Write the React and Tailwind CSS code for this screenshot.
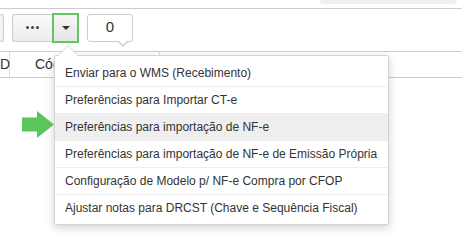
import { useState } from 'react';

const items = [
  'Enviar para o WMS (Recebimento)',
  'Preferências para Importar CT-e',
  'Preferências para importação de NF-e',
  'Preferências para importação de NF-e de Emissão Própria',
  'Configuração de Modelo p/ NF-e Compra por CFOP',
  'Ajustar notas para DRCST (Chave e Sequência Fiscal)',
];

function DropdownMenu({ active }) {
  return (
    <div className="absolute left-[54px] top-[55px] w-[335px] bg-white border border-[#d4d4d4] rounded-[2px] shadow-[0_3px_10px_rgba(0,0,0,0.18)] py-[3px]">
      {/* caret on top */}
      <div className="absolute left-[2px] top-[-11px] w-0 h-0 border-l-[11px] border-r-[11px] border-b-[11px] border-l-transparent border-r-transparent border-b-[#d4d4d4]" />
      <div className="absolute left-[3px] top-[-10px] w-0 h-0 border-l-[10px] border-r-[10px] border-b-[10px] border-l-transparent border-r-transparent border-b-white" />
      {items.map((label, i) => (
        <div
          key={label}
          className={`h-[27px] flex items-center px-[10px] text-[12px] text-[#333] ${
            i > 0 ? 'border-t border-[#eee]' : ''
          } ${i === active ? 'bg-[#efefef]' : ''}`}
        >
          {label}
        </div>
      ))}
    </div>
  );
}

export default function App() {
  const [active] = useState(2);

  return (
    <div className="relative w-[462px] h-[249px] bg-white overflow-hidden font-['Liberation_Sans',Arial,sans-serif] text-[#333]">
      <div className="h-[9px] border-b border-[#ccc] flex justify-end">
        <div className="w-[137px] h-[4px] mr-[5px] rounded-b-[4px] bg-[#f0efed]" />
      </div>

      <div className="flex items-center h-[36px] pt-[1px]">
        <div className="w-[4px] h-[28px] border border-l-0 border-[#ccc] rounded-r-[3px] bg-[#f3f3f3]" />
        <div className="flex ml-[8px]">
          <button className="w-[40px] h-[28px] border border-r-0 border-[#ccc] rounded-l-[3px] bg-gradient-to-b from-[#fafafa] to-[#ececec] flex items-center justify-center gap-[2px]">
            <span className="w-[3px] h-[3px] rounded-full bg-[#444]" />
            <span className="w-[3px] h-[3px] rounded-full bg-[#444]" />
            <span className="w-[3px] h-[3px] rounded-full bg-[#444]" />
          </button>
          <button className="w-[27px] h-[30px] -my-[1px] border-2 border-[#62c462] bg-gradient-to-b from-[#f6f6f6] to-[#e6e6e6] flex items-center justify-center">
            <span className="w-0 h-0 border-l-[4px] border-r-[4px] border-t-[4px] border-l-transparent border-r-transparent border-t-[#333]" />
          </button>
        </div>
        <div className="relative ml-[8px] w-[46px] h-[28px] border border-[#ccc] rounded-[3px] bg-white flex items-center justify-center text-[15px] text-[#333]">
          0
          <div className="absolute left-[29px] bottom-[-6px] w-0 h-0 border-l-[6px] border-r-[6px] border-t-[6px] border-l-transparent border-r-transparent border-t-[#ccc]" />
          <div className="absolute left-[30px] bottom-[-4px] w-0 h-0 border-l-[5px] border-r-[5px] border-t-[5px] border-l-transparent border-r-transparent border-t-white" />
        </div>
      </div>

      <div className="mt-[6px] h-[27px] border-t border-b border-[#ccc] flex text-[14px]">
        <div className="w-[10px] border-r border-[#ddd] flex items-center">D</div>
        <div className="w-[150px] border-r border-[#ddd] flex items-center pl-[25px]">
          {/* the rest of the header is hidden under the open menu */}
          <span className="w-[19px] overflow-hidden whitespace-nowrap">Código</span>
        </div>
        <div className="flex-1" />
      </div>

      <DropdownMenu active={active} />

      {/* green pointer */}
      <svg className="absolute left-[22px] top-[111px]" width="32" height="27" viewBox="0 0 32 27">
        <path d="M0 6.5 H15 V0 L32 13.5 L15 27 V20.5 H0 Z" fill="#5cc45c" />
      </svg>
    </div>
  );
}
